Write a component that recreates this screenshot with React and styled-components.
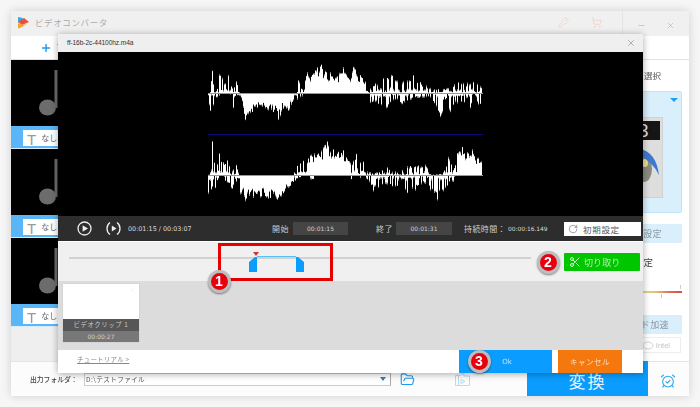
import React from "react";
import styled, { createGlobalStyle } from "styled-components";
import { Scissors, RotateCw, KeyRound, ShoppingCart, AlarmClockCheck, FolderOpen, X, Minus, Plus } from "lucide-react";

const Global = createGlobalStyle`
  html, body { margin: 0; padding: 0; background: #f6f6f6; overflow: hidden; }
  body { font-family: "Noto Sans CJK JP", "Liberation Sans", sans-serif; }
  #root { width: 700px; height: 407px; overflow: hidden; }
`;

const Page = styled.div`
  width: 700px; height: 407px; padding: 11px; box-sizing: border-box; filter: blur(0.35px);
`;
const Win = styled.div`
  position: relative; width: 678px; height: 385px; display: flex; flex-direction: column;
  background: #fff; box-shadow: 0 0 9px rgba(0,0,0,.16);
`;
const TitleBar = styled.div`
  height: 25px; background: #f0f0f0; display: flex; align-items: center; padding: 0 0 0 6px;
`;
const AppTitle = styled.div`
  font-size: 8.5px; letter-spacing: .62px; color: #aaa; margin-left: 6px; flex: 1; margin-top: -3px;
`;
const Logo = styled.svg`width: 12px; height: 13px; margin-top: -2px;`;
const TitleIcons = styled.div`
  display: flex; align-items: center; color: #f3c9c3; gap: 22px; margin-right: 20px; margin-top: -3px;
`;
const WinControls = styled.div`
  align-self: stretch; width: 67px; border-left: 1px solid #e4e4e4; display: flex; align-items: center;
  justify-content: center; gap: 20px; color: #999; padding-top: 3px; box-sizing: border-box;
`;
const Toolbar = styled.div`
  height: 24px; box-sizing: border-box; border-bottom: 1px solid #e2e2e2; display: flex; align-items: center;
  padding-left: 29px; color: #1b9cf0; gap: 4px; font-size: 10px;
`;
const ToolLabel = styled.span`color: #555;`;
const Main = styled.div`flex: 1; display: flex; min-height: 0; background: #fff;`;
const List = styled.div`width: 130px; background: #efefef; display: flex; flex-direction: column;`;
const ListItem = styled.div`display: flex; flex-direction: column;`;
const Thumb = styled.div`
  height: 66px; background: #000; display: flex; align-items: flex-end; padding: 0 0 10px 28px; box-sizing: border-box;
`;
const NoteIcon = styled.svg`width: 20px; height: 46px;`;
const Band = styled.div`
  height: 23px; background: #5ab6f7; border-bottom: 1px solid #d6ecfb; box-sizing: border-box; padding: 4px 0 2px 12px; display: flex;
`;
const Tag = styled.div`
  flex: 1; background: #fff; display: flex; align-items: center; padding-left: 4px; gap: 5px;
  font-size: 8px; color: #666; line-height: 1;
`;
const TGlyph = styled.span`font-size: 15px; font-family: "Liberation Sans", sans-serif; color: #999; margin-top: 2px;`;
const Center = styled.div`flex: 1;`;
const Right = styled.div`
  width: 90px; border-left: 1px solid #e8e8e8; box-sizing: border-box; padding: 9px 7px 0 0; display: flex; flex-direction: column; align-items: stretch;
`;
const PanelLabel = styled.div`
  font-size: 8.5px; color: #555; text-align: right; padding-right: 21px; height: 22px; line-height: 12px;
`;
const Card = styled.div`
  height: 122px; background: #d9effb; border: 1px solid #bfe5fa; border-radius: 2px; box-sizing: border-box; position: relative;
  padding: 25px 0 0 20px;
`;
const CardArrow = styled.div`
  position: absolute; right: 3px; top: 6px; width: 0; height: 0;
  border-left: 4px solid transparent; border-right: 4px solid transparent; border-top: 4px solid #1e9ff0;
`;
const BoxArt = styled.svg`width: 42px; height: 81px; display: block;`;
const Pale = styled.div`
  height: ${p => p.$h}px; margin-top: ${p => p.$mt}px; background: #d9effb; border-radius: 1px; font-size: 9px; letter-spacing: .4px; color: #8a9aa6;
  display: flex; align-items: center; justify-content: flex-end; padding-right: ${p => p.$pr}px;
`;
const PlainLabel = styled.div`
  font-size: 9.5px; color: #444; text-align: right; padding-right: 29px; margin-top: 12px; height: 14px; line-height: 14px;
`;
const Slider = styled.div`
  height: 2px; margin-top: 22px; background: linear-gradient(90deg, #e8d8a0 45%, #e5c070 68%, #e06a5a 85%, #dd4c45); position: relative;
`;
const Tick = styled.i`
  position: absolute; left: ${p => p.$x}px; top: ${p => p.$t}px; width: 1px; height: 4px; background: #ccc;
`;
const IntelBox = styled.div`
  height: 16px; margin-top: 3px; border: 1px solid #eee; margin-right: 1px; font-size: 7.5px; color: #c4c4c4;
  display: flex; justify-content: flex-end; align-items: center; gap: 2px; padding-right: 10px; font-family: "Liberation Sans", sans-serif; box-sizing: border-box;
`;
const IntelLogo = styled.svg`width: 12px; height: 9px;`;
const BottomBar = styled.div`
  height: 35px; border-top: 1px solid #e4e4e4; box-sizing: border-box; background: #fcfcfc; display: flex; align-items: center; padding-left: 19px;
`;
const OutLabel = styled.div`font-size: 6.8px; color: #444; width: 54px; white-space: nowrap; font-weight: 500;`;
const PathInput = styled.div`
  width: 307px; height: 13px; background: #fff; border: 1px solid #ccc; border-right-color: #aaa; box-sizing: border-box; font-size: 6.6px; color: #555;
  display: flex; align-items: center; justify-content: space-between; padding: 0 4px 0 1px; letter-spacing: .4px; line-height: 1;
`;
const Caret = styled.i`
  width: 0; height: 0; border-left: 3.5px solid transparent; border-right: 3.5px solid transparent; border-top: 4px solid #2a7fc0;
`;
const FolderBtn = styled.div`margin-left: 9px; color: #1b9cf0; display: flex;`;
const FilmFolder = styled.svg`width: 15px; height: 13px; margin-left: 40px;`;
const Convert = styled.div`
  width: 121px; align-self: stretch; margin-left: 57px; margin-top: -1px; background: #0a9dff; color: #eaf6ff; font-size: 17px; letter-spacing: 2px;
  display: flex; align-items: center; justify-content: center; padding-top: 3px; box-sizing: border-box; line-height: 1;
`;
const Clock = styled.div`margin-left: 12px; color: #2aa5ec; display: flex; margin-top: 3px;`;

const Dialog = styled.div`
  position: absolute; left: 47px; top: 23px; width: 585px; height: 339px; background: #fff; display: flex; flex-direction: column;
  box-shadow: 0 1px 7px rgba(0,0,0,.35);
`;
const DlgTitle = styled.div`
  height: 18px; background: #efefef; display: flex; align-items: center; justify-content: space-between; padding: 0 7px 1px 9px;
  font-size: 6.6px; color: #333; font-family: "Liberation Sans", sans-serif; box-sizing: border-box; letter-spacing: -.08px;
`;
const CloseBtn = styled.div`color: #666; display: flex;`;
const Black = styled.div`height: 164px; background: #000;`;
const Wave = styled.svg`display: block; width: 585px; height: 164px;`;
const Controls = styled.div`
  height: 26px; background: #2d2d2d; border-bottom: 1px solid #fff; box-sizing: border-box; display: flex; align-items: center; color: #d8d8d8; padding-left: 19px;
  font-size: 8px;
`;
const RoundIcon = styled.svg`width: 15px; height: 15px; margin-right: ${p => p.$mr}px;`;
const TimeText = styled.span`
  font-family: "DejaVu Sans", sans-serif; font-size: ${p => p.$fs}px; width: ${p => p.$w}px; margin-left: ${p => p.$ml || 0}px; white-space: nowrap; color: #ddd;
`;
const CtlLabel = styled.span`font-size: 8px; letter-spacing: .4px; width: ${p => p.$w}px; color: #ccc; white-space: nowrap;`;
const TimeBox = styled.div`
  width: ${p => p.$w}px; height: 13px; background: #454545; font-family: "DejaVu Sans", sans-serif; font-size: 6px; color: #d0d0d0;
  display: flex; align-items: center; justify-content: center; margin-right: ${p => p.$mr}px;
`;
const ResetBtn = styled.div`
  width: 77px; height: 14px; margin-left: 17px; background: #fff; color: #555; font-size: 8.5px; letter-spacing: .7px; display: flex; align-items: center; padding-left: 4px; box-sizing: border-box; gap: 5px;
`;
const TrimRow = styled.div`
  height: 39px; background: #f0f0f0; display: flex; align-items: flex-start; padding: 11px 3px 0 11px; box-sizing: border-box; gap: 33px;
`;
const Track = styled.div`
  position: relative; width: 462px; height: 2px; margin-top: 4px; background: #d2d2d2;
`;
const Range = styled.div`
  position: absolute; left: 188px; top: -1px; width: 39px; height: 1px; background: #5cc0f8;
`;
const Handle = styled.svg`position: absolute; left: ${p => p.$x}px; top: 0; width: 8px; height: 15px;`;
const Marker = styled.div`
  position: absolute; left: 184px; top: -5px; width: 0; height: 0; border-left: 3px solid transparent; border-right: 3px solid transparent; border-top: 4px solid #d8302a;
`;
const CutBtn = styled.div`
  width: 76px; height: 18px; background: #00c600; color: #b4f0ac; font-size: 9px; letter-spacing: .1px; display: flex; align-items: center; gap: 3px; padding-left: 5px; box-sizing: border-box; border-radius: 1px;
`;
const CutIcon = styled.span`display: flex; color: #d8f8d0;`;
const ClipArea = styled.div`height: 69px; background: #dcdcdc; padding: 3px 0 0 5px; box-sizing: border-box;`;
const Clip = styled.div`width: 76px; height: 58px; display: flex; flex-direction: column; background: #fff; position: relative; box-shadow: 0 0 1px rgba(0,0,0,.2);`;
const ClipThumb = styled.div`height: 35px; display: flex; justify-content: flex-end; padding: 2px 2px 0 0; color: #e6e6e6;`;
const ClipName = styled.div`height: 12px; background: #565656; color: #c8c8c8; font-size: 6.4px; letter-spacing: .6px; text-align: center; line-height: 12px;`;
const ClipTime = styled.div`height: 11px; background: #777; color: #d0d0d0; font-size: 6px; font-family: "DejaVu Sans", sans-serif; text-align: center; line-height: 11px;`;
const DlgFoot = styled.div`flex: 1; display: flex; align-items: stretch; padding-left: 19px;`;
const Tutorial = styled.span`
  font-size: 6.5px; color: #888; text-decoration: underline; letter-spacing: .2px; align-self: center; width: 382px; margin-top: -5px;
`;
const Ok = styled.div`
  width: 93px; background: #0a9dff; color: #bfe4ff; font-size: 7px; display: flex; align-items: center; justify-content: center; font-family: "DejaVu Sans", sans-serif; padding-left: 3px; box-sizing: border-box;
`;
const Cancel = styled.div`
  width: 64px; margin-left: 6px; background: #f5780f; color: #fbdcc0; font-size: 7.5px; letter-spacing: .5px; display: flex; align-items: center; justify-content: center;
`;
const RedFrame = styled.div`
  position: absolute; left: 207px; top: 232px; width: 115px; height: 38px; border: 3px solid #e60000; box-sizing: border-box;
`;
const Badge = styled.div`
  position: absolute; left: ${p => p.$x - 11.5}px; top: ${p => p.$y - 11.5}px; width: 23px; height: 23px; border-radius: 50%; box-sizing: border-box;
  background: #e8000e; border: 3px solid #bdbdbd; box-shadow: 0 1px 2px rgba(0,0,0,.45); color: #fff;
  font: 700 14px/17px "Liberation Sans", sans-serif; text-align: center;
`;

const lerp = (pts, x) => {
  for (let i = 0; i < pts.length - 1; i++) {
    if (x >= pts[i][0] && x <= pts[i + 1][0]) {
      const t = (x - pts[i][0]) / (pts[i + 1][0] - pts[i][0]);
      return pts[i][1] * (1 - t) + pts[i + 1][1] * t;
    }
  }
  return 0;
};
const T_UP = [[52,0],[60,2],[65,75],[70,10],[80,5],[88,55],[95,40],[105,25],[115,50],[125,10],[138,30],[150,0],[318,0],[325,40],[335,5],[350,55],[365,50],[380,70],[393,80],[405,60],[420,55],[440,45],[460,70],[475,40],[490,75],[510,50],[525,30],[540,10],[555,25],[580,40],[605,50],[620,30],[650,30],[670,50],[690,30],[720,10],[770,10],[805,30],[830,25],[850,30],[875,15]];
const T_DN = [[52,30],[60,50],[70,30],[80,10],[90,2],[120,3],[130,45],[140,5],[150,5],[165,75],[185,55],[200,40],[225,40],[250,55],[265,75],[280,40],[295,50],[305,25],[320,15],[335,5],[350,0],[525,0],[540,25],[565,30],[590,40],[610,15],[635,30],[660,15],[700,10],[720,10],[750,65],[780,50],[800,25],[840,40],[870,30],[875,10]];
const B_UP = [[52,0],[60,5],[65,105],[75,5],[88,65],[100,30],[112,40],[125,5],[137,30],[145,0],[310,0],[320,25],[340,40],[360,55],[385,60],[412,95],[430,70],[460,70],[480,30],[497,60],[520,35],[530,5],[560,5],[590,20],[620,5],[660,25],[685,25],[705,25],[730,0],[760,5],[775,50],[790,10],[800,60],[815,80],[835,60],[845,70],[860,45],[875,50]];
const B_DN = [[52,55],[62,40],[75,35],[85,5],[105,15],[125,40],[135,10],[150,50],[165,70],[190,60],[210,60],[235,65],[260,70],[280,50],[300,30],[315,15],[330,5],[350,0],[368,15],[372,0],[480,0],[484,15],[490,0],[530,10],[550,45],[575,25],[605,30],[650,50],[675,40],[705,20],[740,70],[760,40],[790,15],[800,0],[875,0]];

let seed = 11;
const rnd = () => (seed = (seed * 1664525 + 1013904223) % 4294967296) / 4294967296;
// jitter under the measured envelope: solid stretches stay full, the rest is sparse spikes
const solidFactor = r => (r < 0.4 ? 0.6 + 0.2 * (r / 0.4) : 0.8 + 0.25 * ((r - 0.4) / 0.6));
const sparseFactor = r => (r < 0.65 ? 0.03 + 0.3 * (r / 0.65) : 0.7 + 0.35 * ((r - 0.65) / 0.35));
const onPoint = (pts, zx) => pts.some(([px]) => Math.abs(px - zx) <= 1.5);
const channel = (up, dn, base, solidZones) => {
  let solid = "", tips = "";
  for (let x = 208; x < 483; x++) {
    const zx = (x - 190) * 3;
    const factor = solidZones.some(([a, b]) => zx >= a && zx <= b) ? solidFactor : sparseFactor;
    const fu = onPoint(up, zx) ? 1.05 : factor(rnd());
    const fd = onPoint(dn, zx) ? 1.05 : factor(rnd());
    const u = (lerp(up, zx) / 3) * fu;
    const d = (lerp(dn, zx) / 3) * fd;
    solid += `M${x + 0.5} ${(base - u).toFixed(1)}V${(base + d).toFixed(1)}`;
    tips += `M${x + 0.5} ${(base - u - (u > 1 ? 2 * rnd() : 0)).toFixed(1)}V${(base + d + (d > 1 ? 2 * rnd() : 0)).toFixed(1)}`;
  }
  return { solid, tips };
};
const top = channel(T_UP, T_DN, 93, [[150, 310], [350, 525]]);
const bot = channel(B_UP, B_DN, 175, [[150, 310], [360, 480], [800, 875]]);

const Note = () => (
  <NoteIcon viewBox="0 0 20 46">
    <ellipse cx="8.5" cy="37.5" rx="8.5" ry="8" fill="#6c6c6c" />
    <rect x="15.5" y="0" width="3" height="38" fill="#6c6c6c" />
  </NoteIcon>
);

const Row = () => (
  <ListItem>
    <Thumb><Note /></Thumb>
    <Band><Tag><TGlyph>T</TGlyph>なし</Tag></Band>
  </ListItem>
);

export default function App() {
  return (
    <Page>
      <Global />
      <Win>
        <TitleBar>
          <Logo viewBox="0 0 12 13">
            <path d="M1 1 L6 2 L4 7 L1 6Z" fill="#38a8e8" />
            <path d="M1 6 L7 2 L12 6 L5 9Z" fill="#e8503a" />
            <path d="M1 7 L5 9 L10 8 L2 12.5 L1 12Z" fill="#f5a623" />
          </Logo>
          <AppTitle>ビデオコンバータ</AppTitle>
          <TitleIcons>
            <KeyRound size={11} strokeWidth={1.2} />
            <ShoppingCart size={11} strokeWidth={1.4} />
          </TitleIcons>
          <WinControls>
            <Minus size={9} strokeWidth={1.2} />
            <X size={9} strokeWidth={1.2} />
          </WinControls>
        </TitleBar>
        <Toolbar><Plus size={12} strokeWidth={2.8} /><ToolLabel>フ</ToolLabel></Toolbar>
        <Main>
          <List><Row /><Row /><Row /></List>
          <Center />
          <Right>
            <PanelLabel>出力形式を選択</PanelLabel>
            <Card>
              <CardArrow />
              <BoxArt viewBox="0 0 42 81">
                <rect x="0" y="0" width="42" height="81" fill="#dedede" stroke="#c6c6c6" />
                <rect x="2" y="4" width="37" height="19" fill="#151515" />
                <text x="17" y="20" fontSize="19" fontFamily="Liberation Sans" fill="#ddd">3</text>
                <ellipse cx="23" cy="52" rx="8" ry="13" fill="#8a8a80" />
                <ellipse cx="24" cy="46" rx="3" ry="4" fill="#e8dc90" />
                <path d="M19 32 Q35 35 38 58 Q31 44 19 39Z" fill="#3f78d0" />
              </BoxArt>
            </Card>
            <Pale $h={19} $mt={11} $pr={20}>詳細設定</Pale>
            <PlainLabel>設定</PlainLabel>
            <Slider><Tick $x={80} $t={-6} /><Tick $x={61} $t={3} /></Slider>
            <Pale $h={19} $mt={22} $pr={13}>ハード加速</Pale>
            <IntelBox>
              <IntelLogo viewBox="0 0 12 9" fill="none" stroke="#d4d4d4"><ellipse cx="6" cy="4.5" rx="5" ry="3.5" /></IntelLogo>
              Intel
            </IntelBox>
          </Right>
        </Main>
        <BottomBar>
          <OutLabel>出力フォルダ：</OutLabel>
          <PathInput>D:\テストファイル<Caret /></PathInput>
          <FolderBtn><FolderOpen size={15} strokeWidth={1.8} /></FolderBtn>
          <FilmFolder viewBox="0 0 15 13" fill="none" stroke="#b5dcf5">
            <path d="M.5 2.5H5L6.5 1H9V3H14.5V12.5H.5Z" />
            <path d="M3.5 3V12.5M6 6.5L10 8.5L6 10.5Z" />
          </FilmFolder>
          <Convert>変換</Convert>
          <Clock><AlarmClockCheck size={16} strokeWidth={1.6} /></Clock>
        </BottomBar>

        <Dialog>
          <DlgTitle>ff-16b-2c-44100hz.m4a<CloseBtn><X size={10} strokeWidth={1.1} /></CloseBtn></DlgTitle>
          <Black>
            <Wave viewBox="58 52 585 164">
              <path d={top.tips} stroke="#8c8c8c" strokeWidth="1" />
              <path d={bot.tips} stroke="#8c8c8c" strokeWidth="1" />
              <path d={top.solid} stroke="#fff" strokeWidth="1" />
              <path d={bot.solid} stroke="#fff" strokeWidth="1" />
              <path d="M208 93.5H483M208 175.5H483" stroke="#999" strokeWidth="1" />
              <path d="M208 134.5H483" stroke="#0a0a78" strokeWidth="1" />
            </Wave>
          </Black>
          <Controls>
            <RoundIcon $mr={14} viewBox="0 0 15 15" fill="none" stroke="#eee">
              <circle cx="7.5" cy="7.5" r="6.5" strokeWidth="1.3" />
              <path d="M5.6 4.2L11 7.5L5.6 10.8Z" fill="#eee" stroke="none" />
            </RoundIcon>
            <RoundIcon $mr={0} viewBox="0 0 15 15" fill="none" stroke="#eee">
              <path d="M4 1.5A7.5 7.5 0 0 0 4 13.5M11 1.5A7.5 7.5 0 0 1 11 13.5" strokeWidth="1.3" />
              <path d="M5.8 4.5L10.5 7.5L5.8 10.5Z" fill="#eee" stroke="none" />
            </RoundIcon>
            <TimeText $ml={7} $w={144} $fs={6.4}>00:01:15&nbsp;/&nbsp;00:03:07</TimeText>
            <CtlLabel $w={21}>開始</CtlLabel>
            <TimeBox $w={55} $mr={28}>00:01:15</TimeBox>
            <CtlLabel $w={20}>終了</CtlLabel>
            <TimeBox $w={56} $mr={12}>00:01:31</TimeBox>
            <CtlLabel $w={44}>持続時間：</CtlLabel>
            <TimeText $w={39} $fs={5.9}>00:00:16.149</TimeText>
            <ResetBtn><RotateCw size={10} strokeWidth={1.3} />初期設定</ResetBtn>
          </Controls>
          <TrimRow>
            <Track>
              <Marker />
              <Range />
              <Handle $x={180} viewBox="0 0 8 15"><path d="M0 5L6 0H8V15H0Z" fill="#0a9dff" /></Handle>
              <Handle $x={227} viewBox="0 0 8 15"><path d="M0 0H2L8 5V15H0Z" fill="#0a9dff" /></Handle>
            </Track>
            <CutBtn><CutIcon><Scissors size={12} strokeWidth={2} /></CutIcon>切り取り</CutBtn>
          </TrimRow>
          <ClipArea>
            <Clip>
              <ClipThumb><X size={9} strokeWidth={1} /></ClipThumb>
              <ClipName>ビデオクリップ 1</ClipName>
              <ClipTime>00:00:27</ClipTime>
            </Clip>
          </ClipArea>
          <DlgFoot>
            <Tutorial>チュートリアル &gt;</Tutorial>
            <Ok>Ok</Ok>
            <Cancel>キャンセル</Cancel>
          </DlgFoot>
        </Dialog>
        <RedFrame />
        <Badge $x={208} $y={270}>1</Badge>
        <Badge $x={537} $y={251}>2</Badge>
        <Badge $x={468} $y={350}>3</Badge>
      </Win>
    </Page>
  );
}
